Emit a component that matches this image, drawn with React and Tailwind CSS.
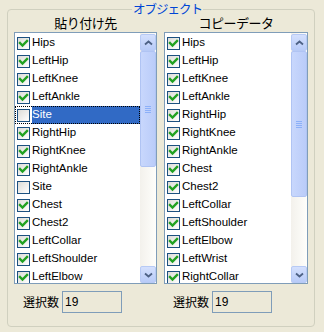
import React from "react";

const leftItems = [
    { name: "Hips", checked: true },
    { name: "LeftHip", checked: true },
    { name: "LeftKnee", checked: true },
    { name: "LeftAnkle", checked: true },
    { name: "Site", checked: false, selected: true },
    { name: "RightHip", checked: true },
    { name: "RightKnee", checked: true },
    { name: "RightAnkle", checked: true },
    { name: "Site", checked: false },
    { name: "Chest", checked: true },
    { name: "Chest2", checked: true },
    { name: "LeftCollar", checked: true },
    { name: "LeftShoulder", checked: true },
    { name: "LeftElbow", checked: true },
];

const rightItems = [
    "Hips", "LeftHip", "LeftKnee", "LeftAnkle", "RightHip", "RightKnee", "RightAnkle",
    "Chest", "Chest2", "LeftCollar", "LeftShoulder", "LeftElbow", "LeftWrist", "RightCollar",
].map((name) => ({ name, checked: true }));

function CheckBox({ checked }) {
    return (
        <div className="w-[13px] h-[13px] shrink-0 border border-[#1C5180] bg-gradient-to-br from-[#DCDCD7] to-[#FFFFFF] flex items-center justify-center">
            {checked && (
                <svg width="11" height="11" viewBox="0 0 11 11">
                    <path d="M2 5 L4.5 7.5 L9 3" fill="none" stroke="#21A121" strokeWidth="2.4" strokeLinecap="square" />
                </svg>
            )}
        </div>
    );
}

function ScrollButton({ down }) {
    return (
        <div className="h-[17px] shrink-0 rounded-[2px] border border-[#B7CAF5] bg-gradient-to-b from-[#D4E0FD] to-[#B8CBF8] flex items-center justify-center">
            <svg width="9" height="6" viewBox="0 0 9 6">
                <path d={down ? "M1 1.5 L4.5 4.5 L8 1.5" : "M1 4.5 L4.5 1.5 L8 4.5"} fill="none" stroke="#4D6185" strokeWidth="1.8" />
            </svg>
        </div>
    );
}

function ScrollBar({ thumb }) {
    return (
        <div className="w-[16px] shrink-0 flex flex-col bg-gradient-to-r from-[#F3F1EC] to-[#FEFEFB] pt-[1px]">
            <ScrollButton />
            <div className="flex-1 flex flex-col">
                <div
                    className="rounded-[2px] border border-[#B0C4F3] bg-gradient-to-r from-[#C8D7FC] to-[#BACCF9] flex flex-col items-center justify-center gap-[1px]"
                    style={{ height: thumb }}
                >
                    {[0, 1, 2, 3].map((i) => (
                        <div key={i} className="w-[6px] h-[1px] bg-[#EEF4FE] border-b border-[#8CB0F8]" />
                    ))}
                </div>
            </div>
            <ScrollButton down />
        </div>
    );
}

function ListPanel({ title, items, thumb, width }) {
    return (
        <div className="flex flex-col" style={{ width }}>
            <div className="h-[22px] flex items-center justify-center text-[13px] tracking-[-0.5px] text-black pt-[2px]">{title}</div>
            <div className="h-[252px] border border-[#7F9DB9] bg-white flex overflow-hidden">
                <div className="flex-1 flex flex-col pt-[1px] min-w-0">
                    {items.map((item, i) => (
                        <div
                            key={i}
                            className={`h-[18px] shrink-0 flex items-center pl-[2px] gap-[2px] ${item.selected ? "outline outline-1 outline-dotted outline-black -outline-offset-1" : ""}`}
                        >
                            <CheckBox checked={item.checked} />
                            <span
                                className={`flex-1 h-[18px] flex items-center text-[11.5px] font-['Liberation_Sans',sans-serif] ${item.selected ? "bg-[#316AC5] text-white" : "text-black"}`}
                            >
                                {item.name}
                            </span>
                        </div>
                    ))}
                </div>
                <ScrollBar thumb={thumb} />
            </div>
            <div className="flex items-center mt-[7px] pl-[9px]">
                <span className="w-[39px] text-[12px] text-black">選択数</span>
                <div className="w-[60px] h-[22px] border border-[#7F9DB9] flex items-center pl-[2px] text-[12px] font-['Liberation_Sans',sans-serif] text-black">
                    19
                </div>
            </div>
        </div>
    );
}

export default function App() {
    return (
        <div className="w-[324px] h-[332px] bg-[#ECE9D8] pt-[9px] pl-[7px] font-['Noto_Sans_CJK_JP',sans-serif] leading-none">
            <div className="relative w-[308px] h-[318px] rounded-[4px] border border-[#D0D0BF] px-[6px]">
                <span className="absolute left-[124px] -top-[9px] bg-[#ECE9D8] px-[1px] text-[12.5px] text-[#0046D5] tracking-[-1px] leading-[16px]">
                    オブジェクト
                </span>
                <div className="flex gap-[7px]">
                    <ListPanel title="貼り付け先" items={leftItems} thumb={116} width={143} />
                    <ListPanel title="コピーデータ" items={rightItems} thumb={146} width={144} />
                </div>
            </div>
        </div>
    );
}
